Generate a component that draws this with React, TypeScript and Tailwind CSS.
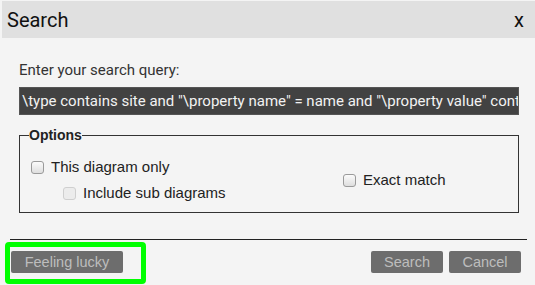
import React from 'react';

const Checkbox: React.FC<{ disabled?: boolean }> = ({ disabled }) => (
  <span
    className={
      disabled
        ? 'inline-block w-[13px] h-[13px] rounded-[3px] border border-[#cfcfcf] bg-[#ececec]'
        : 'inline-block w-[13px] h-[13px] rounded-[3px] border border-[#9a9a9a] bg-gradient-to-b from-[#fbfbfb] to-[#dedede]'
    }
  />
);

const Btn: React.FC<{ label: string; width: string }> = ({ label, width }) => (
  <button
    className={`${width} h-[22px] rounded-[2px] bg-[#6d6d6d] text-[#bdbdbd] text-[14.5px] leading-[22px] font-['Liberation_Sans',Arial,sans-serif]`}
  >
    {label}
  </button>
);

export default function App() {
  return (
    <div className="relative w-[535px] h-[285px] overflow-hidden bg-[#f4f4f4] font-['Roboto',sans-serif] text-[#222]">
      {/* Title bar */}
      <div className="ml-[2px] mt-[1px] h-[37px] bg-[#e0e0e0] flex items-center justify-between pl-[5px] pr-[11px]">
        <span className="text-[20px] text-[#111]">Search</span>
        <span className="text-[20px] text-[#111]">x</span>
      </div>

      <div className="pl-[19px] pr-[16px]">
        <div className="mt-[24px] text-[15px] leading-[17px] text-[#333]">Enter your search query:</div>
        <div className="mt-[8px] h-[28px] border border-[#555] bg-[#424242] pl-[2px] overflow-hidden whitespace-nowrap text-[15px] leading-[26px] text-[#f2f2f2]">
          \type contains site and "\property name" = name and "\property value" contains
        </div>

        <fieldset className="mt-[12px] border border-[#333] pb-[9px]">
          <legend className="ml-[9px] text-[14px] leading-[16px] font-bold text-[#222] font-['Liberation_Sans',Arial,sans-serif]">
            Options
          </legend>
          <div className="flex items-center pt-[14px] pl-[11px] text-[15px] text-[#222] font-['Liberation_Sans',Arial,sans-serif]">
            <div className="w-[312px] flex flex-col gap-[6px]">
              <label className="h-[20px] flex items-center gap-[7px]">
                <Checkbox />
                <span>This diagram only</span>
              </label>
              <label className="h-[20px] flex items-center gap-[7px] pl-[32px]">
                <Checkbox disabled />
                <span>Include sub diagrams</span>
              </label>
            </div>
            <label className="h-[20px] flex items-center gap-[7px]">
              <Checkbox />
              <span>Exact match</span>
            </label>
          </div>
        </fieldset>
      </div>

      <div className="mt-[26px] ml-[10px] mr-[8px] h-px bg-[#222]" />

      <div className="mt-[11px] flex items-center pl-[11px] pr-[14px]">
        <Btn label="Feeling lucky" width="w-[112px]" />
        <div className="ml-auto flex gap-[6px]">
          <Btn label="Search" width="w-[72px]" />
          <Btn label="Cancel" width="w-[72px]" />
        </div>
      </div>

      {/* highlight annotation */}
      <div className="absolute left-[5px] top-[242px] w-[141px] h-[42px] border-[5px] border-[#00ff00] rounded-[4px]" />
    </div>
  );
}
